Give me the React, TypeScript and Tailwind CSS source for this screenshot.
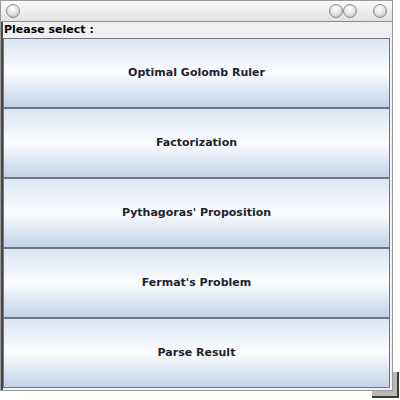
const items = [
  'Optimal Golomb Ruler',
  'Factorization',
  "Pythagoras' Proposition",
  "Fermat's Problem",
  'Parse Result',
];

function Bubble() {
  return (
    <div className="w-[14px] h-[14px] rounded-full border border-[#8a8a8a] bg-[radial-gradient(circle_at_45%_35%,#ffffff_0%,#e6e6e6_45%,#b0b0b0_100%)]" />
  );
}

export default function App() {
  return (
    <div className="w-[400px] h-[400px] bg-white relative font-['DejaVu_Sans',sans-serif]">
      {/* shadow of a window behind, bottom right */}
      <div className="absolute left-[372px] top-[372px] w-[27px] h-[26px] bg-[#b8b8b8] border-r-2 border-b-2 border-[#3c3c3c]" />
      <div className="relative w-[393px] h-[391px] flex flex-col border border-[#9a9a9a] bg-[#eeeeee]">
        {/* title bar */}
        <div className="h-[21px] flex items-center px-[5px] bg-gradient-to-b from-[#fafafa] to-[#e2e2e2] border-b border-[#8c8c8c]">
          <Bubble />
          <div className="flex-1" />
          <div className="flex">
            <Bubble />
            <Bubble />
          </div>
          <div className="w-[16px]" />
          <Bubble />
        </div>
        {/* content */}
        <div className="flex-1 flex flex-col border-l-2 border-[#4a4a4a] pr-[2px] pb-[2px] bg-[#f0f0f0]">
          <div className="h-[16px] pl-[1px] text-[11px] leading-[16px] font-bold text-black">Please select :</div>
          <div className="flex-1 flex flex-col">
            {items.map((label) => (
              <button
                key={label}
                className="flex-1 flex items-center justify-center border border-[#6f7580] bg-gradient-to-b from-[#dce6f2] via-[#fbfcfe] to-[#c3d3e7] text-[11px] font-bold text-[#1d2230]"
              >
                {label}
              </button>
            ))}
          </div>
        </div>
      </div>
    </div>
  );
}
